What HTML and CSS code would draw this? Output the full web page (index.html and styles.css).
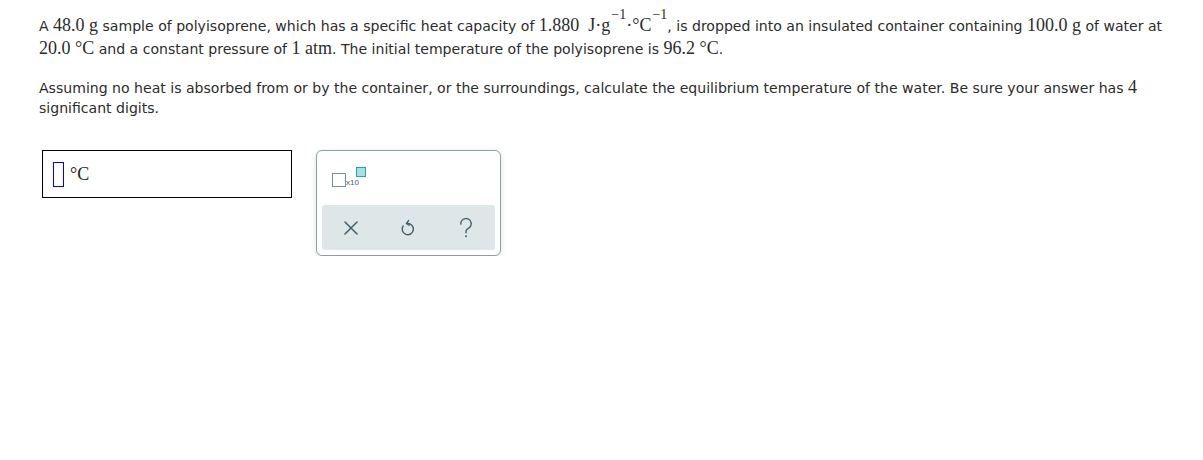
FILE: index.html
```html
<!DOCTYPE html>
<html>
<head>
<meta charset="utf-8">
<link rel="stylesheet" href="styles.css">
</head>
<body>
<div class="page">
  <p class="q q1">A <span class="m">48.0</span> <span class="m">g</span> sample of polyisoprene, which has a specific heat capacity of <span class="m">1.880&nbsp;&nbsp;J·g<sup>−1</sup>·°C<sup>−1</sup></span>, is dropped into an insulated container containing <span class="m">100.0</span> <span class="m">g</span> of water at<br><span class="m">20.0 °C</span> and a constant pressure of <span class="m">1 atm</span>. The initial temperature of the polyisoprene is <span class="m">96.2 °C</span>.</p>
  <p class="q q2">Assuming no heat is absorbed from or by the container, or the surroundings, calculate the equilibrium temperature of the water. Be sure your answer has <span class="m">4</span><br>significant digits.</p>
  <div class="answer-row">
    <div class="answer-box">
      <span class="cursor"></span>
      <span class="unit">°C</span>
    </div>
    <div class="palette">
      <div class="palette-top">
        <span class="sci">
          <span class="sci-box"></span><span class="sci-x">x10</span><span class="sci-exp"></span>
        </span>
      </div>
      <div class="palette-bar">
        <span class="btn"><svg width="14" height="14" viewBox="0 0 14 14"><path d="M1 1 L13 13 M13 1 L1 13" stroke="#3f5f6b" stroke-width="1.5" fill="none" stroke-linecap="round"/></svg></span>
        <span class="btn"><svg width="16" height="19" viewBox="0 0 16 19"><path d="M6.9 5.6 A5.6 5.6 0 1 1 3.2 7.9" stroke="#3f5f6b" stroke-width="1.4" fill="none" stroke-linecap="round"/><path d="M8.6 2.6 L6.4 5.5 L9.2 7.2" stroke="#3f5f6b" stroke-width="1.4" fill="none" stroke-linecap="round" stroke-linejoin="round"/></svg></span>
        <span class="btn"><svg width="14" height="20" viewBox="0 0 14 20"><path d="M1.8 6 A5.2 5.2 0 1 1 9 10.6 C7.6 11.3 7 12.2 7 13.6 L7 14.8" stroke="#3f5f6b" stroke-width="1.4" fill="none" stroke-linecap="round"/><circle cx="7" cy="18.2" r="0.95" fill="#3f5f6b"/></svg></span>
      </div>
    </div>
  </div>
</div>
</body>
</html>
```

FILE: styles.css
```css
html, body {
  margin: 0;
  padding: 0;
  background: #fff;
}
.page {
  padding: 15px 0 0 39px;
  font-family: "DejaVu Sans", Verdana, sans-serif;
  font-size: 14.07px;
  color: #2b2b2b;
}
.q {
  margin: 0;
  line-height: 20px;
  white-space: nowrap;
}
.q1 {
  line-height: 23px;
}
.q2 {
  margin-top: 17px;
}
.m {
  font-family: "Liberation Serif", "Times New Roman", serif;
  font-size: 18px;
  line-height: 0;
}
.m sup {
  font-size: 14px;
  vertical-align: 0;
  position: relative;
  top: -12px;
  line-height: 0;
  margin-left: 1px;
}
.answer-row {
  display: flex;
  align-items: flex-start;
  margin-top: 32px;
  margin-left: 3px;
  gap: 24px;
}
.answer-box {
  width: 250px;
  height: 48px;
  box-sizing: border-box;
  border: 1px solid #000;
  display: flex;
  align-items: center;
  padding-left: 10px;
}
.cursor {
  width: 11px;
  height: 25px;
  box-sizing: border-box;
  border: 1px solid #0000ff;
}
.unit {
  font-family: "Liberation Serif", "Times New Roman", serif;
  font-size: 18px;
  color: #222;
  margin-left: 6px;
}
.palette {
  width: 185px;
  height: 106px;
  box-sizing: border-box;
  border: 1px solid #8ba1a7;
  border-radius: 6px;
  box-shadow: 0 2px 6px rgba(0,0,0,0.12);
  background: #fff;
  padding: 0 5px 5px 5px;
  display: flex;
  flex-direction: column;
}
.palette-top {
  height: 54px;
}
.sci {
  position: relative;
  display: block;
  width: 40px;
  height: 30px;
  margin-left: 10px;
  margin-top: 16px;
}
.sci-box {
  position: absolute;
  left: 0;
  top: 6px;
  width: 14px;
  height: 14px;
  box-sizing: border-box;
  border: 1.5px solid #7a9097;
}
.sci-x {
  position: absolute;
  left: 14px;
  top: 11px;
  font-family: "Liberation Sans", Arial, sans-serif;
  font-size: 8px;
  line-height: 9px;
  color: #3f5f6b;
}
.sci-exp {
  position: absolute;
  left: 24px;
  top: 0;
  width: 10px;
  height: 10px;
  box-sizing: border-box;
  background: #a9dfe6;
  border: 1.5px solid #2d9fb4;
}
.palette-bar {
  flex: 1;
  background: #dfe6e8;
  border-radius: 3px;
  display: grid;
  grid-template-columns: 1fr 1fr 1fr;
  align-items: center;
  justify-items: center;
}
.btn {
  display: flex;
  align-items: center;
  justify-content: center;
}
```
